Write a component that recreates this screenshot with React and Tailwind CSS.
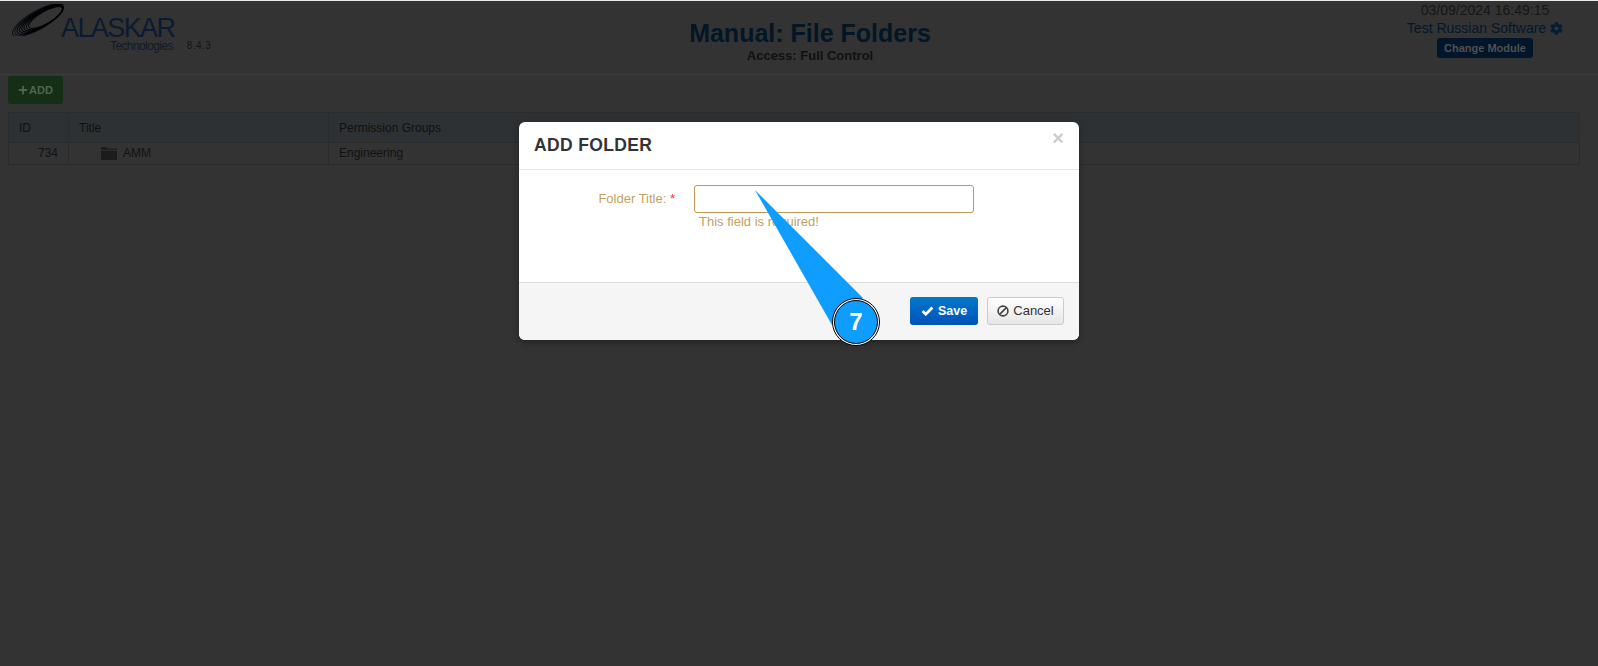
import React from 'react';
import { FaCog, FaPlus } from 'react-icons/fa';

const FONT = "font-['Liberation_Sans',Arial,sans-serif]";

// swoosh of stacked rings in the logo, they bunch up at the top right
const RINGS = [0, 1, 2, 3, 4, 5, 6, 7];

const Logo = () => (
    <svg width="52" height="32" viewBox="0 0 52 32" className="shrink-0">
        {RINGS.map((i) => {
            const cx = 26 + i * 1.07;
            const cy = 16 - i * 0.35;
            return (
                <ellipse
                    key={i}
                    cx={cx}
                    cy={cy}
                    rx={29 - i * 1.4}
                    ry={9 - i * 0.42}
                    transform={`rotate(-30 ${cx} ${cy})`}
                    fill="none"
                    stroke={i < 2 ? '#050f1e' : '#000000'}
                    strokeWidth="0.9"
                />
            );
        })}
    </svg>
);

const FolderIcon = () => (
    <svg width="16" height="13" viewBox="0 0 16 13" className="shrink-0">
        <path d="M0 1.5C0 .7.6 0 1.4 0h3.5c.6 0 1 .4 1.3 1l.3.6H16v1.2H0z" fill="#1c1c1c" />
        <path d="M0 3.8h16V12c0 .6-.5 1-1 1H1c-.5 0-1-.4-1-1z" fill="#1c1c1c" />
    </svg>
);

const CheckIcon = () => (
    <svg width="13" height="10" viewBox="0 0 13 10" className="shrink-0">
        <path d="M1.6 5l3.2 3.2L11.4 1.6" fill="none" stroke="#ffffff" strokeWidth="2.8" />
    </svg>
);

const BanIcon = () => (
    <svg width="12" height="12" viewBox="0 0 12 12" className="shrink-0">
        <circle cx="6" cy="6" r="4.9" fill="none" stroke="#444444" strokeWidth="1.6" />
        <path d="M2.6 9.4L9.4 2.6" stroke="#444444" strokeWidth="1.6" />
    </svg>
);

const Header = () => (
    <div className="flex h-[74px] border-b border-[#3b3b3b]">
        <div className="w-[248px] shrink-0 pl-[12px] pt-[3px]">
            <div className="flex h-[32px]">
                <Logo />
                <div className="ml-[-3px] mt-[12px] h-[24px] text-[27px] leading-[24px] tracking-[-1.6px] text-[#0a1a30]">ALASKAR</div>
            </div>
            <div className="ml-[98px] mt-[4px] flex items-start">
                <span className="text-[12px] leading-[13px] tracking-[-0.6px] text-[#111a28]">Technologies</span>
                <span className="ml-[14px] text-[10px] leading-[11px] tracking-[0.4px] text-[#141414]">8.4.3</span>
            </div>
        </div>
        <div className="flex-1 pt-[18px] text-center">
            <div className="text-[25px] font-bold leading-[29px] text-[#021626]">Manual: File Folders</div>
            <div className="text-[13px] font-bold leading-[16px] text-[#111111]">Access: Full Control</div>
        </div>
        <div className="flex w-[226px] shrink-0 flex-col items-center">
            <div className="text-[14px] leading-[18px] text-[#161616]">03/09/2024 16:49:15</div>
            <div className="flex h-[18px] items-center gap-[4px] text-[14px] text-[#02182a]">
                Test Russian Software
                <FaCog className="text-[13px] text-[#021e33]" />
            </div>
            <div className="mt-[1px] flex h-[20px] w-[96px] items-center justify-center rounded-[3px] bg-[#01152b] text-[11px] font-bold text-[#505050]">
                Change Module
            </div>
        </div>
    </div>
);

const FileTable = () => (
    <div className="ml-[8px] mr-[18px] mt-[8px] border border-[#2b2b2b] text-[12px]">
        <div className="flex h-[29px] items-center bg-[#2d3134] text-[#101010]">
            <div className="flex h-full w-[60px] items-center border-r border-[#282c30] pl-[10px]">ID</div>
            <div className="flex h-full w-[260px] items-center border-r border-[#282c30] pl-[10px]">Title</div>
            <div className="flex h-full flex-1 items-center pl-[10px]">Permission Groups</div>
        </div>
        <div className="flex h-[22px] items-center border-t border-[#2b2b2b] text-[#121212]">
            <div className="flex h-full w-[60px] items-center justify-end border-r border-[#2b2b2b] pb-[1px] pr-[10px]">734</div>
            <div className="flex h-full w-[260px] items-center gap-[6px] border-r border-[#2b2b2b] pb-[1px] pl-[32px]">
                <FolderIcon />
                AMM
            </div>
            <div className="flex h-full flex-1 items-center pb-[1px] pl-[10px]">Engineering</div>
        </div>
    </div>
);

const AddFolderModal = () => (
    <div className="absolute left-[519px] top-[121px] w-[560px] rounded-[6px] bg-white shadow-[0_3px_7px_rgba(0,0,0,0.3)]">
        <div className="flex h-[48px] items-center justify-between border-b border-[#e5e5e5] pl-[15px] pr-[15px]">
            <div className="text-[17.5px] font-bold tracking-[0.35px] text-[#333333]">ADD FOLDER</div>
            <div className="mb-[16px] text-[20px] font-bold leading-[20px] text-[#cccccc]">×</div>
        </div>
        <div className="flex h-[112px] items-start pt-[15px]">
            <div className="w-[156px] pt-[5px] text-right text-[13px] leading-[18px] text-[#c49f62]">
                Folder Title: <span className="text-[#ff3333]">*</span>
            </div>
            <div className="ml-[19px]">
                <div className="h-[28px] w-[280px] rounded-[3px] border border-[#c09853] bg-white" />
                <div className="pl-[5px] text-[13px] leading-[18px] text-[#c49f62]">This field is required!</div>
            </div>
        </div>
        <div className="flex h-[58px] items-center justify-end gap-[9px] rounded-b-[6px] border-t border-[#dddddd] bg-[#f5f5f5] pb-[1px] pr-[15px]">
            <div className="flex h-[28px] w-[68px] items-center justify-center gap-[4px] rounded-[3px] bg-gradient-to-b from-[#0078cc] to-[#0052b8] text-[12.5px] font-bold text-white">
                <CheckIcon />
                Save
            </div>
            <div className="flex h-[28px] w-[77px] items-center justify-center gap-[4px] rounded-[3px] border border-[#cccccc] bg-gradient-to-b from-white to-[#e6e6e6] text-[13px] text-[#333333]">
                <BanIcon />
                Cancel
            </div>
        </div>
    </div>
);

// numbered tutorial pointer drawn over the dialog
const Callout = () => (
    <div className="absolute left-[750px] top-[185px]">
        <svg width="140" height="168" viewBox="0 0 140 168" className="block">
            <polygon points="5,4 113,112 82,139" fill="#0f9dff" />
            <circle cx="106" cy="136" r="23.5" fill="#ffffff" stroke="#000000" strokeWidth="1" />
            <circle cx="106" cy="136" r="21.5" fill="#0f9dff" stroke="#000000" strokeWidth="1" />
        </svg>
        <div className="absolute left-[83px] top-[119px] w-[46px] text-center text-[24px] font-bold leading-[34px] text-white">7</div>
    </div>
);

const App = () => (
    <div className={`relative min-h-screen overflow-hidden border-t border-[#e8e8e8] bg-[#333333] ${FONT}`}>
        <Header />
        <div className="mx-[8px] mt-[1px] flex h-[28px] w-[55px] items-center justify-center gap-[1px] rounded-[3px] bg-[#152e16] text-[11px] font-bold text-[#4f654f]">
            <FaPlus className="text-[10px]" />
            ADD
        </div>
        <FileTable />
        <AddFolderModal />
        <Callout />
    </div>
);

export default App;
